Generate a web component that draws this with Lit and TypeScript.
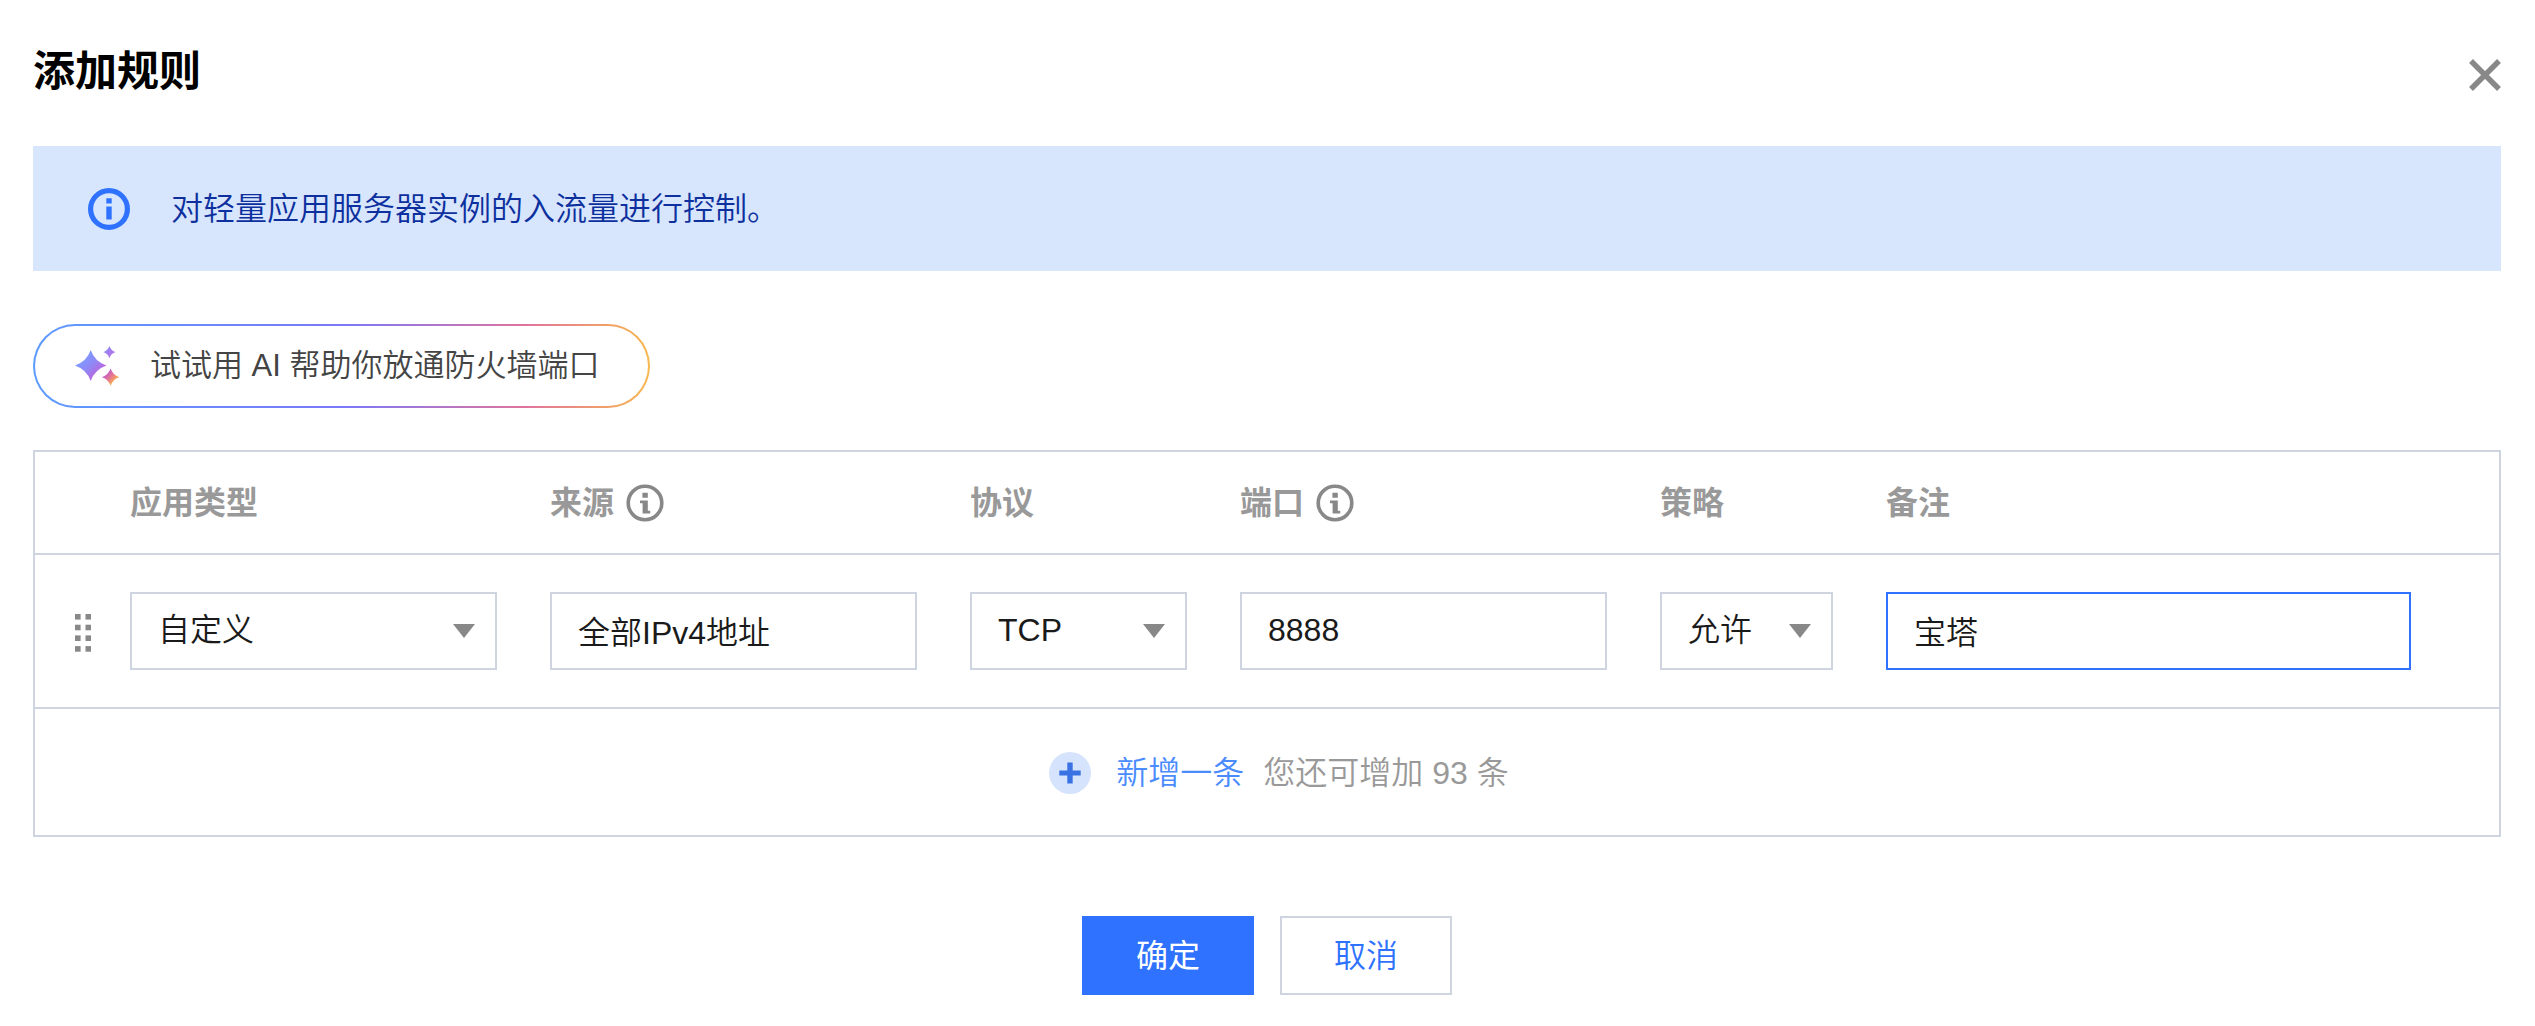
import { LitElement, html, css, svg } from "lit";
import { customElement, state } from "lit/decorators.js";

const infoIcon = (cls: string) => html`
  <svg class=${cls} viewBox="0 0 38 38" aria-hidden="true">
    <circle cx="19" cy="19" r="16.8" fill="none" stroke="currentColor" stroke-width="3.6" />
    <path fill="currentColor" d="M16.4 8.8h5.4v5h-5.4zM14 16.6h7.8v10.2h2.4v2.8h-7.6V19.2H14z" />
  </svg>
`;

const dots = [0, 1, 2, 3].flatMap((row) =>
  [0, 1].map((col) => svg`<rect x=${col * 10.5} y=${row * 10.7} width="5.6" height="5.6" />`)
);

@customElement("app-root")
export class AppRoot extends LitElement {
  @state() private appType = "自定义";
  @state() private source = "全部IPv4地址";
  @state() private protocol = "TCP";
  @state() private port = "8888";
  @state() private policy = "允许";
  @state() private remark = "宝塔";

  static styles = css`
    :host {
      display: block;
      background: #fff;
      color: #1a1a1a;
      font-family: "Liberation Sans", "Noto Sans CJK SC", sans-serif;
      font-size: 32px;
      font-weight: 350;
      line-height: 48px;
    }
    * {
      box-sizing: border-box;
    }
    button,
    input,
    select {
      margin: 0;
      font: inherit;
      color: inherit;
      border-radius: 0;
    }
    svg {
      display: block;
      flex: none;
    }
    .dialog {
      padding: 40px 34px 31px 33px;
    }
    .header {
      display: flex;
      align-items: center;
      justify-content: space-between;
      height: 64px;
      margin-bottom: 42px;
    }
    .title {
      margin: 0;
      font-size: 42px;
      line-height: 64px;
      font-weight: 700;
      color: #000;
    }
    .close {
      display: flex;
      padding: 0;
      margin-top: 6px;
      border: 0;
      background: none;
      color: #888;
      cursor: pointer;
    }
    .close-icon {
      width: 32px;
      height: 32px;
    }
    .notice {
      display: flex;
      align-items: center;
      gap: 41px;
      min-height: 125px;
      padding: 0 55px;
      background: #d7e6fd;
      color: #0d309e;
    }
    .notice-icon {
      width: 42px;
      height: 42px;
      color: #2f72ff;
    }
    .notice-text {
      margin: 0;
    }
    .assistant {
      display: flex;
      align-items: center;
      gap: 29px;
      height: 84px;
      margin: 53px 0 42px;
      padding: 0 48px 0 40px;
      border: 2px solid transparent;
      border-radius: 42px;
      background:
        linear-gradient(#fff, #fff) padding-box,
        linear-gradient(90deg, #5c9bff, #7a78fa 50%, #e0749c 80%, #f8b84e) border-box;
      color: #444;
      font-size: 31px;
      cursor: pointer;
    }
    .assistant-icon {
      width: 46px;
      height: 42px;
    }
    .rules {
      width: 100%;
      table-layout: fixed;
      border: 2px solid #cfd5e0;
      border-collapse: separate;
      border-spacing: 0;
    }
    .rules th,
    .rules td {
      padding: 0 53px 0 0;
      text-align: left;
    }
    .rules .handle-cell {
      padding: 3px 0 0 40px;
    }
    .rules .last {
      padding-right: 88px;
    }
    .col-handle {
      width: 95px;
    }
    .col-wide {
      width: 420px;
    }
    .col-protocol {
      width: 270px;
    }
    .col-policy {
      width: 226px;
    }
    .rules th {
      height: 103px;
      border-bottom: 2px solid #cfd5e0;
      font-weight: 700;
      color: #999;
    }
    .rules .row td {
      height: 154px;
      border-bottom: 2px solid #cfd5e0;
    }
    .rules .add-cell {
      height: 126px;
      padding: 2px 0 0 24px;
    }
    .with-tip {
      display: flex;
      align-items: center;
      gap: 12px;
    }
    .tip-icon {
      width: 38px;
      height: 38px;
      color: #888;
    }
    .handle {
      display: block;
      padding: 0;
      border: 0;
      background: none;
      color: #888;
      cursor: move;
    }
    .handle-icon {
      width: 16px;
      height: 38px;
    }
    .field {
      display: block;
      width: 100%;
      height: 78px;
      padding: 0 26px 2px;
      border: 2px solid #cfd5e0;
      background: #fff;
      outline: none;
    }
    .field.active {
      border-color: #2f72ff;
    }
    .select {
      display: grid;
      align-items: center;
    }
    .select > * {
      grid-area: 1 / 1;
    }
    .select .field {
      appearance: none;
      cursor: pointer;
    }
    .arrow {
      justify-self: end;
      width: 22px;
      height: 14px;
      margin-right: 22px;
      color: #888;
      pointer-events: none;
    }
    .add-line {
      display: flex;
      align-items: center;
      justify-content: center;
      gap: 19px;
    }
    .add {
      display: flex;
      align-items: center;
      gap: 25px;
      padding: 0;
      border: 0;
      background: none;
      color: #4a8cff;
      cursor: pointer;
    }
    .add-icon {
      width: 42px;
      height: 42px;
    }
    .remaining {
      color: #999;
    }
    .actions {
      display: flex;
      justify-content: center;
      gap: 26px;
      margin-top: 79px;
    }
    .action {
      width: 172px;
      height: 79px;
      padding: 0;
      border: 2px solid #cfd5e0;
      background: #fff;
      color: #2f72ff;
      cursor: pointer;
    }
    .action.primary {
      border-color: #2f72ff;
      background: #2f72ff;
      color: #fff;
      font-weight: 400;
    }
  `;

  private renderSelect(label: string, value: string, options: string[], onChange: (v: string) => void) {
    return html`
      <div class="select">
        <select
          class="field"
          aria-label=${label}
          @change=${(e: Event) => onChange((e.target as HTMLSelectElement).value)}
        >
          ${options.map((o) => html`<option ?selected=${o === value}>${o}</option>`)}
        </select>
        <svg class="arrow" viewBox="0 0 22 14" aria-hidden="true"><path fill="currentColor" d="M0 0h22L11 14z" /></svg>
      </div>
    `;
  }

  private renderInput(label: string, value: string, cls: string, onInput: (v: string) => void) {
    return html`<input
      class=${cls}
      type="text"
      aria-label=${label}
      .value=${value}
      @input=${(e: Event) => onInput((e.target as HTMLInputElement).value)}
    />`;
  }

  render() {
    return html`
      <main class="dialog">
        <header class="header">
          <h1 class="title">添加规则</h1>
          <button class="close" type="button" aria-label="关闭">
            <svg class="close-icon" viewBox="0 0 32 32" aria-hidden="true">
              <path d="M2 2l28 28M30 2L2 30" stroke="currentColor" stroke-width="5.4" />
            </svg>
          </button>
        </header>

        <section class="notice">
          <svg class="notice-icon" viewBox="0 0 42 42" aria-hidden="true">
            <circle cx="21" cy="21" r="18.4" fill="none" stroke="currentColor" stroke-width="5.2" />
            <path fill="currentColor" d="M18.3 10.2h5.4v5.2h-5.4zM18.3 18.4h5.4v13.2h-5.4z" />
          </svg>
          <p class="notice-text">对轻量应用服务器实例的入流量进行控制。</p>
        </section>

        <button class="assistant" type="button">
          <svg class="assistant-icon" viewBox="0 0 46 42" aria-hidden="true">
            <defs>
              <linearGradient id="star-blue" x1="0" y1="0" x2="1" y2="1">
                <stop offset="0.2" stop-color="#7b9cff" />
                <stop offset="0.5" stop-color="#9088f5" />
                <stop offset="0.8" stop-color="#c060dc" />
              </linearGradient>
              <linearGradient id="star-violet" x1="0" y1="0" x2="1" y2="1">
                <stop offset="0.2" stop-color="#8f86f5" />
                <stop offset="0.8" stop-color="#b873e8" />
              </linearGradient>
              <linearGradient id="star-warm" x1="0" y1="0" x2="1" y2="1">
                <stop offset="0.25" stop-color="#c45cc8" />
                <stop offset="0.5" stop-color="#e47890" />
                <stop offset="0.75" stop-color="#fbb34a" />
              </linearGradient>
            </defs>
            <path fill="url(#star-blue)" d="M15.7 5Q19.6 16.4 31.4 20.5Q19.6 24.6 15.7 36Q11.8 24.6 0 20.5Q11.8 16.4 15.7 5z" />
            <path fill="url(#star-violet)" d="M34.4 1Q35.9 5.6 40.6 7.1Q35.9 8.6 34.4 13.2Q32.9 8.6 28.2 7.1Q32.9 5.6 34.4 1z" />
            <path fill="url(#star-warm)" d="M35.6 23.6Q37.8 30 44.2 32.2Q37.8 34.4 35.6 40.8Q33.4 34.4 27 32.2Q33.4 30 35.6 23.6z" />
          </svg>
          <span>试试用 AI 帮助你放通防火墙端口</span>
        </button>

        <table class="rules">
          <colgroup>
            <col class="col-handle" />
            <col class="col-wide" />
            <col class="col-wide" />
            <col class="col-protocol" />
            <col class="col-wide" />
            <col class="col-policy" />
            <col />
          </colgroup>
          <thead>
            <tr>
              <th></th>
              <th scope="col">应用类型</th>
              <th scope="col"><span class="with-tip">来源 ${infoIcon("tip-icon")}</span></th>
              <th scope="col">协议</th>
              <th scope="col"><span class="with-tip">端口 ${infoIcon("tip-icon")}</span></th>
              <th scope="col">策略</th>
              <th scope="col" class="last">备注</th>
            </tr>
          </thead>
          <tbody>
            <tr class="row">
              <td class="handle-cell">
                <button class="handle" type="button" aria-label="拖动排序">
                  <svg class="handle-icon" viewBox="0 0 16 38" fill="currentColor" aria-hidden="true">${dots}</svg>
                </button>
              </td>
              <td>${this.renderSelect("应用类型", this.appType, ["自定义"], (v) => (this.appType = v))}</td>
              <td>${this.renderInput("来源", this.source, "field", (v) => (this.source = v))}</td>
              <td>${this.renderSelect("协议", this.protocol, ["TCP"], (v) => (this.protocol = v))}</td>
              <td>${this.renderInput("端口", this.port, "field", (v) => (this.port = v))}</td>
              <td>${this.renderSelect("策略", this.policy, ["允许"], (v) => (this.policy = v))}</td>
              <td class="last">${this.renderInput("备注", this.remark, "field active", (v) => (this.remark = v))}</td>
            </tr>
            <tr>
              <td class="add-cell" colspan="7">
                <div class="add-line">
                  <button class="add" type="button">
                    <svg class="add-icon" viewBox="0 0 42 42" aria-hidden="true">
                      <circle cx="21" cy="21" r="21" fill="#d6e3fc" />
                      <path fill="#3a72e4" d="M18.3 10.4h5.4v8h8v5.2h-8v8h-5.4v-8h-8v-5.2h8z" />
                    </svg>
                    <span>新增一条</span>
                  </button>
                  <span class="remaining">您还可增加 93 条</span>
                </div>
              </td>
            </tr>
          </tbody>
        </table>

        <footer class="actions">
          <button class="action primary" type="button">确定</button>
          <button class="action" type="button">取消</button>
        </footer>
      </main>
    `;
  }
}
